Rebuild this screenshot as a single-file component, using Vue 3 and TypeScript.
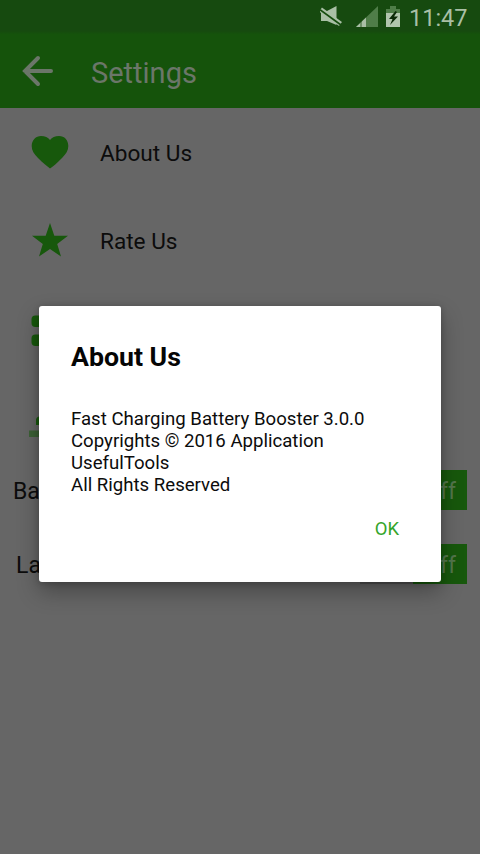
<script setup lang="ts">
import { ref } from 'vue'

interface MenuItem {
  icon: 'heart' | 'star' | 'apps' | 'person'
  label: string
}

interface ToggleItem {
  label: string
  indent: boolean
}

const menu: MenuItem[] = [
  { icon: 'heart', label: 'About Us' },
  { icon: 'star', label: 'Rate Us' },
  { icon: 'apps', label: '' },
  { icon: 'person', label: '' },
]

const toggles: ToggleItem[] = [
  { label: 'Ba', indent: false },
  { label: 'La', indent: true },
]

const message: string[] = [
  'Fast Charging Battery Booster 3.0.0',
  'Copyrights © 2016 Application',
  'UsefulTools',
  'All Rights Reserved',
]

const dialogOpen = ref(true)
</script>

<template>
  <div class="screen">
    <header class="status">
      <svg class="mute" viewBox="0 0 24 22">
        <path d="M1 5h6l9.500-5v19l-9.500-4H1z" fill="#a9bfa5" />
        <path d="M.5 3.500l20 14.500" stroke="#a9bfa5" stroke-width="5" />
        <path d="M0 3.800l21 15.200" stroke="#164d0e" stroke-width="1.700" />
      </svg>
      <svg class="signal" viewBox="0 0 22 21">
        <path d="M0 21L22 0v21z" fill="#4f7d48" />
        <path d="M0 21l10-9.500v9.500z" fill="#a9bfa5" />
        <path d="M5 14v7" stroke="#164d0e" stroke-width=".8" />
      </svg>
      <svg class="battery" viewBox="0 0 14 21">
        <path d="M4 0h6v3h4v5H0V3h4z" fill="#4f7d48" />
        <path d="M0 7h14v14H0z" fill="#b1c5ad" />
        <path d="M9.500 5L3 13h3.500L4 19l8-8.500H8L11 6z" fill="#0b2907" />
      </svg>
      <span class="clock">11:47</span>
    </header>

    <nav class="bar">
      <svg class="back" viewBox="0 0 32 32">
        <path d="M16 3L3 16l13 13M3 16h26" fill="none" stroke="#6b7669" stroke-width="4" stroke-linecap="round" />
      </svg>
      <h1>Settings</h1>
    </nav>

    <main>
      <div v-for="item in menu" :key="item.icon" class="row">
        <svg class="icon" viewBox="0 0 44 44">
          <path
            v-if="item.icon === 'heart'"
            d="M22 38.500C19 36 15 33 10 28C6 24 3.700 20.500 3.700 16C3.700 10 8 6 13 6C17 6 20 7.500 22 10C24 7.500 27 6 31 6C36.500 6 40.300 10 40.300 16C40.300 20.500 38 24 34 28C29 33 25 36.500 22 38.500Z"
          />
          <path
            v-else-if="item.icon === 'star'"
            d="M22 5l4.300 12.700 13.700.1-10.800 8.200L33 38.500l-11-7.600-11 7.600 3.800-12.500L4 17.800l13.700-.1z"
          />
          <g v-else-if="item.icon === 'apps'">
            <rect x="3.500" y="9.500" width="16" height="11.500" rx="4" />
            <rect x="3.500" y="28.500" width="16" height="11.500" rx="4" />
          </g>
          <g v-else>
            <path d="M8 31V26q0-3 4-4v9z" />
            <rect x="1" y="36.500" width="20" height="6.500" fill="#3c6136" />
          </g>
        </svg>
        <span>{{ item.label }}</span>
      </div>

      <div v-for="t in toggles" :key="t.label" class="toggle-row">
        <span :class="{ indent: t.indent }">{{ t.label }}</span>
        <div class="switch"><div class="thumb">Off</div></div>
      </div>
    </main>

    <section v-if="dialogOpen" class="dialog" role="dialog">
      <h2>About Us</h2>
      <div class="message">
        <div v-for="line in message" :key="line">{{ line }}</div>
      </div>
      <button type="button" @click="dialogOpen = false">OK</button>
    </section>
  </div>
</template>

<style>
body {
  background: #666;
}
</style>

<style scoped>
.screen {
  position: relative;
  width: 480px;
  height: 854px;
  overflow: hidden;
  background: #666;
  color: #0c0c0c;
  font-family: Roboto, "Liberation Sans", sans-serif;
}
svg {
  display: block;
  flex: none;
}
.status {
  display: flex;
  height: 34px;
  box-sizing: border-box;
  padding: 6px 13px 0 0;
  justify-content: flex-end;
  background: linear-gradient(#164a0f 31px, #15520b);
}
.mute {
  width: 24px;
  height: 22px;
  margin-right: 12px;
}
.signal {
  width: 22px;
  height: 21px;
  margin-right: 8px;
}
.battery {
  width: 14px;
  height: 21px;
  margin-right: 9px;
}
.clock {
  width: 58px;
  font-size: 23.500px;
  line-height: 24px;
  color: #a9bfa5;
  white-space: nowrap;
}
.bar {
  display: flex;
  align-items: center;
  height: 74px;
  box-sizing: border-box;
  padding-left: 22px;
  background: #15530b;
}
.back {
  width: 32px;
  height: 32px;
}
h1 {
  margin: 3px 0 0 37px;
  font-size: 29px;
  line-height: 34px;
  font-weight: 400;
  color: #6b7669;
}
main {
  padding-top: 1px;
}
.row {
  display: flex;
  align-items: center;
  height: 88px;
  padding-left: 28px;
  font-size: 22.600px;
}
.row span {
  padding-top: 1px;
}
.icon {
  width: 44px;
  height: 44px;
  margin: -2px 28px 0 0;
  fill: #17580c;
}
.toggle-row {
  display: flex;
  align-items: center;
  justify-content: space-between;
  height: 40px;
  margin: 9px 13px 34px 13px;
  font-size: 23px;
}
.toggle-row > span {
  padding-top: 3px;
}
.toggle-row + .toggle-row {
  margin-top: 0;
}
.indent {
  padding-left: 3px;
}
.switch {
  display: flex;
  justify-content: flex-end;
  width: 107px;
  height: 40px;
  background: #525252;
}
.thumb {
  width: 54px;
  box-sizing: border-box;
  padding-right: 11px;
  text-align: right;
  line-height: 43px;
  color: #53764d;
  background: #17580c;
}
.dialog {
  position: absolute;
  left: 39px;
  top: 306px;
  display: flex;
  flex-direction: column;
  width: 402px;
  height: 276px;
  box-sizing: border-box;
  padding: 35px 32px 0;
  border-radius: 3px;
  background: #fff;
  box-shadow: 0 10px 22px rgba(0, 0, 0, 0.3), 0 1px 6px rgba(0, 0, 0, 0.2);
}
h2 {
  margin: 0;
  font-size: 26.700px;
  line-height: 32px;
  font-weight: 700;
  color: #050505;
}
.message {
  margin-top: 35px;
  font-size: 18.620px;
  line-height: 22px;
  white-space: nowrap;
}
button {
  align-self: flex-end;
  margin: 20px 10px 0 0;
  padding: 0;
  border: 0;
  background: none;
  font: 400 18.500px/26px Roboto, sans-serif;
  color: #35a52a;
}
</style>
